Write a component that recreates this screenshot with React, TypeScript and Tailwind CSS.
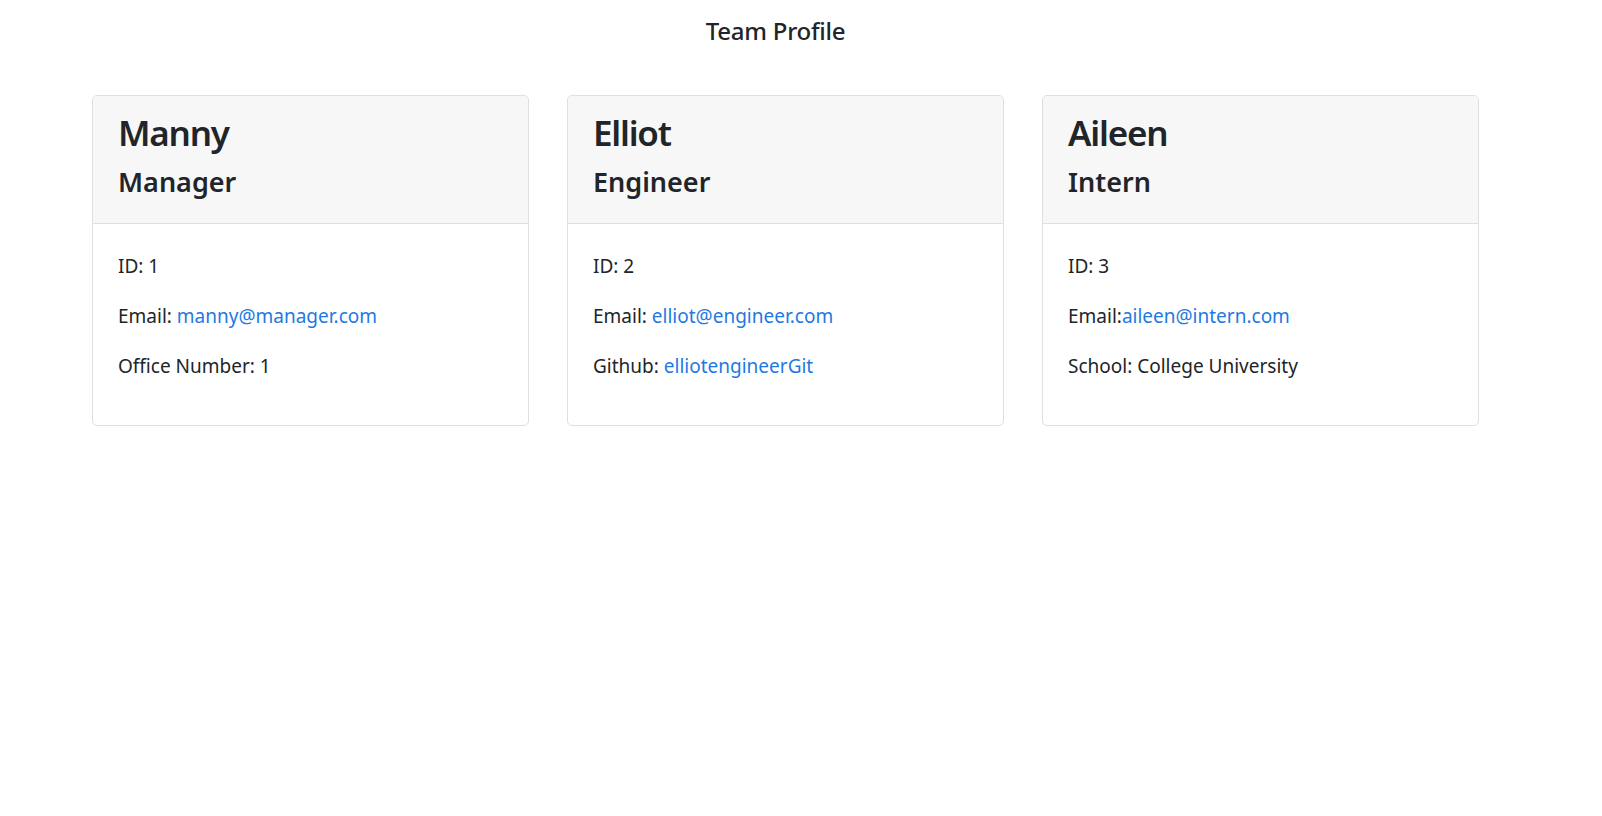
import React from 'react';

interface Member {
  name: string;
  role: string;
  id: number;
  email: string;
  emailSep: string;
  extraLabel: string;
  extraValue: string;
  extraLink?: boolean;
}

const team: Member[] = [
  { name: 'Manny', role: 'Manager', id: 1, email: 'manny@manager.com', emailSep: 'Email: ', extraLabel: 'Office Number: ', extraValue: '1' },
  { name: 'Elliot', role: 'Engineer', id: 2, email: 'elliot@engineer.com', emailSep: 'Email: ', extraLabel: 'Github: ', extraValue: 'elliotengineerGit', extraLink: true },
  { name: 'Aileen', role: 'Intern', id: 3, email: 'aileen@intern.com', emailSep: 'Email:', extraLabel: 'School: ', extraValue: 'College University' },
];

const MemberCard: React.FC<{ member: Member }> = ({ member }) => (
  <div className="w-[437px] rounded-[5px] border border-[#dfdfdf] bg-white">
    <div className="rounded-t-[5px] border-b border-[#dfdfdf] bg-[#f7f7f7] px-[25px] pt-[16px] pb-[25px]">
      <h2 className="mb-[12px] text-[35px] font-semibold leading-[42px] tracking-[-0.035em]">{member.name}</h2>
      <h4 className="text-[27px] font-semibold leading-[32px]">{member.role}</h4>
    </div>
    <div className="px-[25px] pt-[27px] pb-[44px] text-[19px] leading-[30px]">
      <p className="mb-[20px]">ID: {member.id}</p>
      <p className="mb-[20px]">
        {member.emailSep}
        <a href={`mailto:${member.email}`} className="text-[#1f79e2]">{member.email}</a>
      </p>
      <p>
        {member.extraLabel}
        {member.extraLink ? (
          <a href="#" className="text-[#1f79e2]">{member.extraValue}</a>
        ) : (
          member.extraValue
        )}
      </p>
    </div>
  </div>
);

export default function App() {
  return (
    <div className="min-h-screen bg-white text-[#212529]" style={{ fontFamily: '"Noto Sans", "Open Sans", sans-serif' }}>
      <header className="w-[1551px] pt-[16px] text-center">
        <h5 className="text-[24px] font-medium leading-[30px] tracking-[-0.01em]">Team Profile</h5>
      </header>
      <main className="flex gap-[38px] pl-[92px] pt-[49px]">
        {team.map((m) => (
          <MemberCard key={m.id} member={m} />
        ))}
      </main>
    </div>
  );
}
